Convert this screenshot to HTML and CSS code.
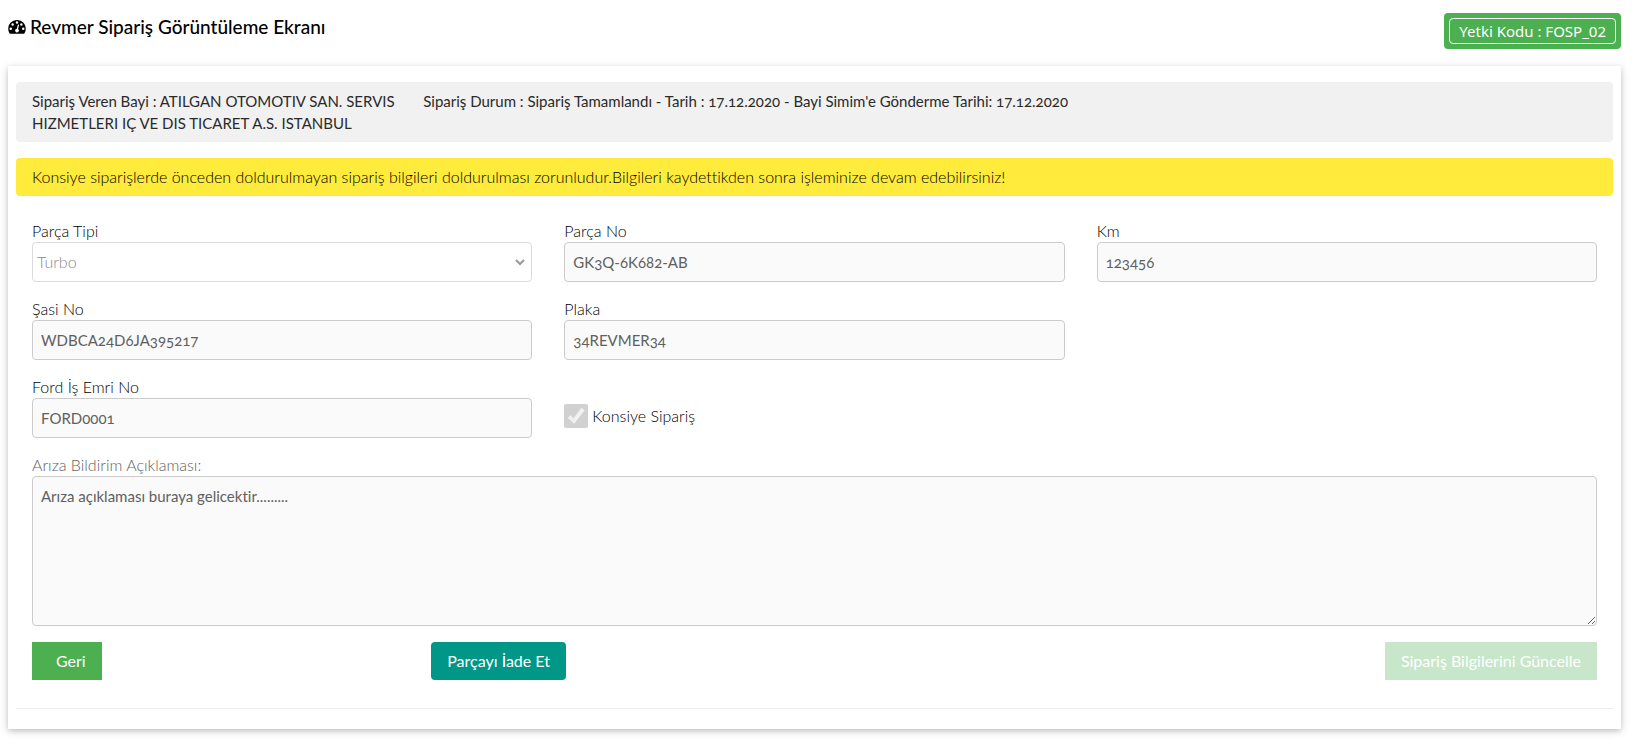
FILE: index.html
```html
<!DOCTYPE html>
<html lang="tr">
<head>
<meta charset="utf-8">
<meta name="viewport" content="width=device-width, initial-scale=1">
<title>Revmer Sipariş Görüntüleme Ekranı</title>
<link rel="stylesheet" href="styles.css">
</head>
<body>
<header class="page-header">
  <h1 class="page-title">
    <svg class="title-icon" viewBox="0 0 1792 1536" aria-hidden="true"><path fill="currentColor" fill-rule="evenodd" d="M384 896a128 128 0 1 0-256 0a128 128 0 0 0 256 0zM576 448a128 128 0 1 0-256 0a128 128 0 0 0 256 0zM1004 929l101-382c8-34-12-69-46-78c-33-9-69 11-78 45L880 896c-78 6-147 60-168 140c-27 103 34 208 137 235s208-34 235-137c21-80-13-161-80-205zM1664 896a128 128 0 1 0-256 0a128 128 0 0 0 256 0zM1024 256a128 128 0 1 0-256 0a128 128 0 0 0 256 0zM1472 448a128 128 0 1 0-256 0a128 128 0 0 0 256 0zM1792 896c0 171-48 338-141 483c-12 18-32 29-54 29H195c-22 0-42-11-54-29C48 1235 0 1067 0 896C0 402 402 0 896 0s896 402 896 896z"/></svg>
    <span>Revmer Sipariş Görüntüleme Ekranı</span>
  </h1>
  <div class="auth-badge"><span class="auth-code">Yetki Kodu : FOSP_02</span></div>
</header>
<main class="card">
  <section class="order-info">
    <div class="order-dealer">Sipariş Veren Bayi : ATILGAN OTOMOTIV SAN. SERVIS HIZMETLERI IÇ VE DIS TICARET A.S. ISTANBUL</div>
    <div class="order-status">Sipariş Durum : Sipariş Tamamlandı - Tarih : 17.12.2020 - Bayi Simim'e Gönderme Tarihi: 17.12.2020</div>
  </section>
  <p class="notice">Konsiye siparişlerde önceden doldurulmayan sipariş bilgileri doldurulması zorunludur.Bilgileri kaydettikden sonra işleminize devam edebilirsiniz!</p>
  <form class="order-form">
    <div class="field">
      <label for="part-type">Parça Tipi</label>
      <div class="select-wrap">
        <select class="control select" id="part-type" disabled><option>Turbo</option></select>
        <svg class="chevron" viewBox="0 0 10 7" aria-hidden="true"><path d="M1 1l4 4 4-4" fill="none" stroke="currentColor" stroke-width="2"/></svg>
      </div>
    </div>
    <div class="field">
      <label for="part-no">Parça No</label>
      <input class="control" id="part-no" type="text" value="GK3Q-6K682-AB" disabled>
    </div>
    <div class="field">
      <label for="km">Km</label>
      <input class="control" id="km" type="text" value="123456" disabled>
    </div>
    <div class="field">
      <label for="chassis">Şasi No</label>
      <input class="control" id="chassis" type="text" value="WDBCA24D6JA395217" disabled>
    </div>
    <div class="field">
      <label for="plate">Plaka</label>
      <input class="control" id="plate" type="text" value="34REVMER34" disabled>
    </div>
    <div class="field field-start">
      <label for="work-order">Ford İş Emri No</label>
      <input class="control" id="work-order" type="text" value="FORD0001" disabled>
    </div>
    <div class="check-field">
      <input class="check" id="consignment" type="checkbox" checked disabled>
      <label for="consignment">Konsiye Sipariş</label>
    </div>
    <div class="field field-wide">
      <label class="muted" for="fault">Arıza Bildirim Açıklaması:</label>
      <textarea class="control textarea" id="fault" disabled>Arıza açıklaması buraya gelicektir.........</textarea>
    </div>
  </form>
  <div class="actions">
    <div class="action"><button class="btn btn-back" type="button">Geri</button></div>
    <div class="action"><button class="btn btn-return" type="button">Parçayı İade Et</button></div>
    <div class="action action-end"><button class="btn btn-update" type="button" disabled>Sipariş Bilgilerini Güncelle</button></div>
  </div>
  <hr class="divider">
</main>
</body>
</html>
```
FILE: styles.css
```css
* {
  box-sizing: border-box;
}

body {
  margin: 0;
  padding: 13px 11px 12px 8px;
  background: #fff;
  color: #000;
  font-family: Lato, "Open Sans", sans-serif;
  font-size: 16px;
  font-weight: 300;
  line-height: 22px;
  font-variant-numeric: oldstyle-nums;
  font-variant-ligatures: none;
}

.page-header {
  display: flex;
  justify-content: space-between;
  align-items: flex-start;
  margin-bottom: 17px;
}

.page-title {
  display: flex;
  align-items: center;
  gap: 4px;
  margin: 0;
  font-size: 19px;
  line-height: 28px;
  font-weight: 500;
}

.title-icon {
  width: 18px;
  height: 15px;
}

.auth-badge {
  padding: 5px;
  border-radius: 4px;
  background: #4caf50;
  color: #fff;
}

.auth-code {
  display: block;
  padding: 0 9px;
  border: 1px solid #fff;
  border-radius: 4px;
  font-family: "Noto Sans", "Open Sans", sans-serif;
  font-size: 15px;
  font-weight: 400;
  font-variant-numeric: lining-nums;
  line-height: 24px;
}

.card {
  padding: 16px 8px 20px;
  background: #fff;
  box-shadow: 0 2px 5px 0 rgba(0, 0, 0, 0.16), 0 2px 10px 0 rgba(0, 0, 0, 0.12);
}

.order-info {
  display: grid;
  grid-template-columns: 1fr 3fr;
  padding: 8px 0;
  border-radius: 4px;
  background: #f1f1f1;
  color: #2a2a2a;
  font-size: 15px;
  font-weight: 400;
}

.order-dealer {
  padding: 0 8px 0 16px;
}

.order-status {
  padding: 0 16px 0 8px;
}

.notice {
  margin: 16px 0 24px;
  padding: 8px 16px;
  border-radius: 4px;
  background: #ffeb3b;
}

.order-form {
  display: grid;
  grid-template-columns: repeat(3, 1fr);
  gap: 16px 32px;
  padding: 0 16px;
}

.field {
  display: flex;
  flex-direction: column;
}

.field-start {
  grid-column: 1;
}

.field-wide {
  grid-column: 1 / -1;
}

.muted {
  color: #616161;
}

.control {
  width: 100%;
  height: 40px;
  padding: 8px;
  border: 1px solid #ccc;
  border-radius: 4px;
  background: #fafafa;
  color: #606060;
  font: inherit;
  font-size: 15px;
  font-weight: 400;
  font-variant-numeric: inherit;
  font-variant-ligatures: inherit;
}

.select-wrap {
  display: grid;
  align-items: center;
}

.select-wrap > * {
  grid-area: 1 / 1;
}

.select {
  appearance: none;
  padding: 8px 4px;
  border-color: #dbdbdb;
  background: #fff;
  color: #8a8a8a;
  font-size: 16px;
  font-weight: 300;
  opacity: 1;
}

.chevron {
  justify-self: end;
  width: 10px;
  height: 7px;
  margin-right: 7px;
  color: #999;
  pointer-events: none;
}

.textarea {
  display: block;
  height: 150px;
  resize: vertical;
}

.check-field {
  display: flex;
  align-items: center;
  gap: 4px;
  padding-top: 18px;
}

.check {
  appearance: none;
  width: 24px;
  height: 24px;
  margin: 0;
  border-radius: 2px;
  background: #d1d1d1;
}

.check:checked::before {
  content: "";
  display: block;
  width: 24px;
  height: 24px;
  background: #f1f1f1;
  clip-path: polygon(15% 58%, 25% 46%, 38% 60%, 71% 16%, 85% 26%, 41% 82%);
}

.actions {
  display: grid;
  grid-template-columns: repeat(4, 1fr);
  margin-top: 16px;
}

.action {
  padding: 0 16px;
}

.action-end {
  grid-column: 3 / -1;
  text-align: right;
}

.btn {
  padding: 8px 16px;
  border: 0;
  color: #fff;
  font: inherit;
  font-weight: 400;
  cursor: pointer;
}

.btn-back {
  padding-left: 24px;
  background: #4caf50;
}

.btn-return {
  border-radius: 4px;
  background: #009688;
}

.btn-update {
  background: #4caf50;
  opacity: 0.3;
  cursor: not-allowed;
}

.divider {
  margin: 28px 0 0;
  border: 0;
  border-top: 1px solid #eee;
}
```
